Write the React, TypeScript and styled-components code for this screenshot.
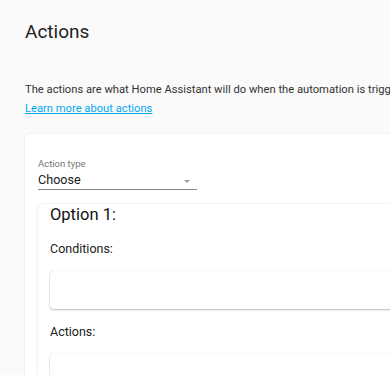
import styled, { createGlobalStyle } from 'styled-components';

const GlobalStyle = createGlobalStyle`
    html, body {
        margin: 0;
        padding: 0;
        background-color: #fafafa;
        font-family: Roboto, 'Noto Sans', sans-serif;
        overflow: hidden;
    }
`
const StyledPage = styled.div`
    width: 900px;
    padding: 20px 0 0 25px;
    color: #212121;
`
const StyledTitle = styled.h1`
    font-size: 19px;
    font-weight: 400;
    line-height: 24px;
    margin: 0;
    margin-bottom: 36px;
`
const StyledDescription = styled.p`
    font-size: 11.2px;
    line-height: 19px;
    margin: 0;
    color: #333333;
    white-space: nowrap;
`
const StyledLink = styled.a`
    display: block;
    width: max-content;
    font-size: 11.2px;
    line-height: 19px;
    color: #03a9f4;
    text-decoration: underline;
    margin-bottom: 16px;
`
const StyledCard = styled.div`
    background-color: #ffffff;
    border-radius: 4px;
    box-shadow: 0 0 2px rgba(0, 0, 0, 0.08), 0 1px 3px rgba(0, 0, 0, 0.05);
    padding: 24px 0 0 13px;
    height: 400px;
`
const StyledSelect = styled.div`
    position: relative;
    width: 159px;
    border-bottom: 1px solid #8a8a8a;
    padding-bottom: 1px;
`
const StyledSelectLabel = styled.div`
    font-size: 9.5px;
    line-height: 12px;
    color: #757575;
`
const StyledSelectValue = styled.div`
    font-size: 12.6px;
    line-height: 16px;
    margin-top: 2px;
    color: #212121;
`
const StyledArrow = styled.span`
    position: absolute;
    right: 7px;
    top: 22px;
    width: 0;
    height: 0;
    border-left: 3px solid transparent;
    border-right: 3px solid transparent;
    border-top: 3px solid #9e9e9e;
`
const StyledOption = styled.div`
    margin-top: 14px;
    background-color: #ffffff;
    border-radius: 4px;
    box-shadow: 0 0 2px rgba(0, 0, 0, 0.14), 0 1px 3px rgba(0, 0, 0, 0.06);
    padding: 1px 0 0 12px;
    height: 300px;
`
const StyledOptionTitle = styled.h2`
    font-size: 16.5px;
    font-weight: 400;
    line-height: 20px;
    margin: 0;
    margin-bottom: 15.5px;
    color: #111111;
`
const StyledSectionLabel = styled.div`
    font-size: 12.5px;
    line-height: 16px;
    color: #212121;
    margin-bottom: 14px;
`
const StyledBox = styled.div`
    height: 38px;
    background-color: #ffffff;
    border-radius: 4px;
    box-shadow: 0 0 1px rgba(0, 0, 0, 0.22), 0 1px 2px rgba(0, 0, 0, 0.25);
    margin-bottom: 15px;
`

export default function App(): JSX.Element {
    return (
        <>
            <GlobalStyle />
            <StyledPage>
                <StyledTitle>Actions</StyledTitle>
                <StyledDescription>The actions are what Home Assistant will do when the automation is triggered.</StyledDescription>
                <StyledLink href="#">Learn more about actions</StyledLink>
                <StyledCard>
                    <StyledSelect>
                        <StyledSelectLabel>Action type</StyledSelectLabel>
                        <StyledSelectValue>Choose</StyledSelectValue>
                        <StyledArrow />
                    </StyledSelect>
                    <StyledOption>
                        <StyledOptionTitle>Option 1:</StyledOptionTitle>
                        <StyledSectionLabel>Conditions:</StyledSectionLabel>
                        <StyledBox />
                        <StyledSectionLabel>Actions:</StyledSectionLabel>
                        <StyledBox />
                    </StyledOption>
                </StyledCard>
            </StyledPage>
        </>
    )
}
